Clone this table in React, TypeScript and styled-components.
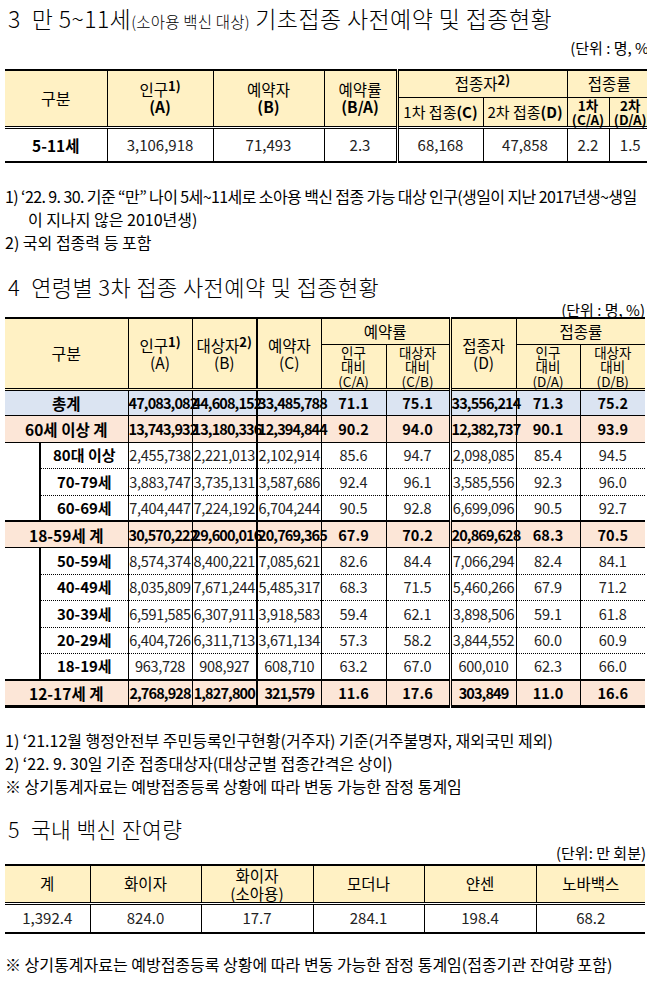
import styled, { createGlobalStyle, css } from 'styled-components';

const GlobalStyle = createGlobalStyle`
  html, body {
    margin: 0;
    padding: 0;
    background: #ffffff;
  }
  body {
    font-family: "Noto Sans CJK KR", "Noto Sans", sans-serif;
    color: #000000;
  }
`;

type Edge = 'none' | 'thin' | 'dot' | 'thick' | 'double' | 'heavy';

const EDGES: Record<Edge, string> = {
  none: 'none',
  thin: '1px solid #000',
  dot: '1px dotted #000',
  thick: '2px solid #000',
  double: '3px double #000',
  heavy: '3px solid #000',
};

interface EdgeProps {
  $top?: Edge;
  $bottom?: Edge;
  $left?: Edge;
  $right?: Edge;
}

const edges = css<EdgeProps>`
  border-top: ${(p) => EDGES[p.$top ?? 'none']};
  border-bottom: ${(p) => EDGES[p.$bottom ?? 'none']};
  border-left: ${(p) => EDGES[p.$left ?? 'thin']};
  border-right: ${(p) => EDGES[p.$right ?? 'thin']};
`;

const YELLOW = '#fff1c4';
const BLUE = '#dbe4f2';
const PEACH = '#fce6d7';

const Page = styled.main`
  box-sizing: border-box;
  width: 647px;
  height: 987px;
  padding-left: 5px;
  overflow: hidden;
`;

const SectionTitle = styled.h2<{ $top: number; $size: number }>`
  margin: ${(p) => p.$top}px 0 0;
  padding-left: 3px;
  font-size: ${(p) => p.$size}px;
  font-weight: 300;
  line-height: 32px;
  letter-spacing: 0.4px;
  white-space: nowrap;
`;

const TitleNo = styled.span`
  margin-right: 11px;
`;

const TitleNote = styled.span`
  font-size: 15.5px;
  letter-spacing: 0.2px;
`;

const Unit = styled.div<{ $top: number; $shift?: number }>`
  margin-top: ${(p) => p.$top}px;
  margin-right: ${(p) => p.$shift ?? 0}px;
  text-align: right;
  font-size: 15px;
  line-height: 15px;
  white-space: nowrap;
`;

const Table = styled.table<{ $width: number; $top: number; $bottom: Edge }>`
  width: ${(p) => p.$width}px;
  margin-top: ${(p) => p.$top}px;
  border-collapse: collapse;
  table-layout: fixed;
  border-top: 2px solid #000;
  border-bottom: ${(p) => EDGES[p.$bottom]};
`;

const Col = styled.col<{ $w: number }>`
  width: ${(p) => p.$w}px;
`;

const Row = styled.tr<{ $h: number }>`
  height: ${(p) => p.$h}px;
`;

const HeadCell = styled.th<EdgeProps & { $size?: number; $lh?: number }>`
  ${edges};
  padding: 0;
  background: ${YELLOW};
  font-size: ${(p) => p.$size ?? 15.5}px;
  font-weight: 400;
  line-height: ${(p) => p.$lh ?? 17}px;
  text-align: center;
  vertical-align: middle;
  white-space: nowrap;
`;

const Paren = styled.span`
  font-weight: 700;
`;

const Sup = styled.sup`
  font-size: 13px;
  font-weight: 700;
  line-height: 0;
  vertical-align: 5px;
`;

const BodyCell = styled.td<
  EdgeProps & { $bg?: string; $bold?: boolean; $size?: number; $tight?: boolean }
>`
  ${edges};
  padding: 0;
  background: ${(p) => p.$bg ?? 'transparent'};
  color: ${(p) => (p.$bold ? '#000' : '#222')};
  font-size: ${(p) => p.$size ?? 14.5}px;
  font-weight: ${(p) => (p.$bold ? 700 : 400)};
  letter-spacing: ${(p) => (p.$tight ? (p.$bold ? -0.9 : -0.3) : 0)}px;
  line-height: 18px;
  text-align: center;
  vertical-align: middle;
  white-space: nowrap;
`;

const Notes = styled.div<{ $top: number }>`
  margin-top: ${(p) => p.$top}px;
  font-size: 16px;
  line-height: 23px;
  white-space: nowrap;
`;

const NoteLine = styled.div<{ $hang?: boolean; $squeeze?: boolean }>`
  padding-left: ${(p) => (p.$hang ? 23 : 0)}px;
  letter-spacing: ${(p) => (p.$squeeze ? -0.6 : 0)}px;
`;

/* ---------- 3. 5~11세 ---------- */

const KIDS_COLS = [102, 106, 111, 73, 86, 84, 42, 42];
const KIDS_VALUES = ['3,106,918', '71,493', '2.3', '68,168', '47,858', '2.2', '1.5'];

function KidsTable() {
  return (
    <Table $width={646} $top={14} $bottom="thick">
      <colgroup>
        {KIDS_COLS.map((w, i) => (
          <Col key={i} $w={w} />
        ))}
      </colgroup>
      <thead>
        <Row $h={27}>
          <HeadCell rowSpan={2} $left="none" $size={16}>
            구분
          </HeadCell>
          <HeadCell rowSpan={2}>
            인구<Sup>1)</Sup>
            <br />
            <Paren>(A)</Paren>
          </HeadCell>
          <HeadCell rowSpan={2}>
            예약자
            <br />
            <Paren>(B)</Paren>
          </HeadCell>
          <HeadCell rowSpan={2}>
            예약률
            <br />
            <Paren>(B/A)</Paren>
          </HeadCell>
          <HeadCell colSpan={2} $left="double" $bottom="thin">
            접종자<Sup>2)</Sup>
          </HeadCell>
          <HeadCell colSpan={2} $bottom="thin" $right="none">
            접종률
          </HeadCell>
        </Row>
        <Row $h={29}>
          <HeadCell $left="double" $size={15}>
            1차 접종<Paren>(C)</Paren>
          </HeadCell>
          <HeadCell $size={15}>
            2차 접종<Paren>(D)</Paren>
          </HeadCell>
          <HeadCell $lh={14} $size={13.5}>
            <Paren>1차</Paren>
            <br />
            <Paren>(C/A)</Paren>
          </HeadCell>
          <HeadCell $lh={14} $size={13.5} $right="none">
            <Paren>2차</Paren>
            <br />
            <Paren>(D/A)</Paren>
          </HeadCell>
        </Row>
      </thead>
      <tbody>
        <Row $h={35}>
          <BodyCell $top="double" $left="none" $bold $size={15.5}>
            5-11세
          </BodyCell>
          {KIDS_VALUES.map((v, i) => (
            <BodyCell
              key={i}
              $top="double"
              $size={15}
              $left={i === 3 ? 'double' : 'thin'}
              $right={i === KIDS_VALUES.length - 1 ? 'none' : 'thin'}
            >
              {v}
            </BodyCell>
          ))}
        </Row>
      </tbody>
    </Table>
  );
}

/* ---------- 4. 연령별 3차 ---------- */

type Kind = 'total' | 'group' | 'sub';

interface AgeRow {
  kind: Kind;
  label: string;
  values: string[];
  top: Edge;
  span?: number;
}

const AGE_COLS = [35, 88, 64, 65, 64, 65, 64, 66, 64, 65];

const AGE_ROWS: AgeRow[] = [
  { kind: 'total', label: '총계', top: 'double', values: ['47,083,082', '44,608,152', '33,485,788', '71.1', '75.1', '33,556,214', '71.3', '75.2'] },
  { kind: 'group', label: '60세 이상 계', top: 'thin', values: ['13,743,932', '13,180,336', '12,394,844', '90.2', '94.0', '12,382,737', '90.1', '93.9'] },
  { kind: 'sub', label: '80대 이상', top: 'thin', span: 3, values: ['2,455,738', '2,221,013', '2,102,914', '85.6', '94.7', '2,098,085', '85.4', '94.5'] },
  { kind: 'sub', label: '70-79세', top: 'dot', values: ['3,883,747', '3,735,131', '3,587,686', '92.4', '96.1', '3,585,556', '92.3', '96.0'] },
  { kind: 'sub', label: '60-69세', top: 'dot', values: ['7,404,447', '7,224,192', '6,704,244', '90.5', '92.8', '6,699,096', '90.5', '92.7'] },
  { kind: 'group', label: '18-59세 계', top: 'thick', values: ['30,570,222', '29,600,016', '20,769,365', '67.9', '70.2', '20,869,628', '68.3', '70.5'] },
  { kind: 'sub', label: '50-59세', top: 'thin', span: 5, values: ['8,574,374', '8,400,221', '7,085,621', '82.6', '84.4', '7,066,294', '82.4', '84.1'] },
  { kind: 'sub', label: '40-49세', top: 'dot', values: ['8,035,809', '7,671,244', '5,485,317', '68.3', '71.5', '5,460,266', '67.9', '71.2'] },
  { kind: 'sub', label: '30-39세', top: 'dot', values: ['6,591,585', '6,307,911', '3,918,583', '59.4', '62.1', '3,898,506', '59.1', '61.8'] },
  { kind: 'sub', label: '20-29세', top: 'dot', values: ['6,404,726', '6,311,713', '3,671,134', '57.3', '58.2', '3,844,552', '60.0', '60.9'] },
  { kind: 'sub', label: '18-19세', top: 'dot', values: ['963,728', '908,927', '608,710', '63.2', '67.0', '600,010', '62.3', '66.0'] },
  { kind: 'group', label: '12-17세 계', top: 'thick', values: ['2,768,928', '1,827,800', '321,579', '11.6', '17.6', '303,849', '11.0', '16.6'] },
];

const TINT: Record<Kind, string | undefined> = {
  total: BLUE,
  group: PEACH,
  sub: undefined,
};

const colLeft = (i: number): Edge => (i === 2 ? 'thick' : i === 5 ? 'double' : 'thin');
const isCount = (i: number) => i < 3 || i === 5;

function AgeTable() {
  return (
    <Table $width={640} $top={0} $bottom="heavy">
      <colgroup>
        {AGE_COLS.map((w, i) => (
          <Col key={i} $w={w} />
        ))}
      </colgroup>
      <thead>
        <Row $h={26}>
          <HeadCell colSpan={2} rowSpan={2} $left="none" $size={16}>
            구분
          </HeadCell>
          <HeadCell rowSpan={2}>
            인구<Sup>1)</Sup>
            <br />
            (A)
          </HeadCell>
          <HeadCell rowSpan={2}>
            대상자<Sup>2)</Sup>
            <br />
            (B)
          </HeadCell>
          <HeadCell rowSpan={2} $left="thick">
            예약자
            <br />
            (C)
          </HeadCell>
          <HeadCell colSpan={2} $bottom="thin">
            예약률
          </HeadCell>
          <HeadCell rowSpan={2} $left="double">
            접종자
            <br />
            (D)
          </HeadCell>
          <HeadCell colSpan={2} $bottom="thin" $right="none">
            접종률
          </HeadCell>
        </Row>
        <Row $h={44}>
          <HeadCell $lh={14.5} $size={13.5}>
            인구
            <br />
            대비
            <br />
            (C/A)
          </HeadCell>
          <HeadCell $lh={14.5} $size={13.5}>
            대상자
            <br />
            대비
            <br />
            (C/B)
          </HeadCell>
          <HeadCell $lh={14.5} $size={13.5}>
            인구
            <br />
            대비
            <br />
            (D/A)
          </HeadCell>
          <HeadCell $lh={14.5} $size={13.5} $right="none">
            대상자
            <br />
            대비
            <br />
            (D/B)
          </HeadCell>
        </Row>
      </thead>
      <tbody>
        {AGE_ROWS.map((row) => {
          const bg = TINT[row.kind];
          const bold = row.kind !== 'sub';
          return (
            <Row key={row.label} $h={26.4}>
              {row.kind === 'sub' ? (
                <>
                  {row.span && (
                    <BodyCell rowSpan={row.span} $top="thin" $left="none" $right="thick" />
                  )}
                  <BodyCell $top={row.top} $left="thick" $bold $size={15}>
                    {row.label}
                  </BodyCell>
                </>
              ) : (
                <BodyCell colSpan={2} $top={row.top} $left="none" $bg={bg} $bold $size={15.5}>
                  {row.label}
                </BodyCell>
              )}
              {row.values.map((v, i) => (
                <BodyCell
                  key={i}
                  $top={row.top}
                  $left={colLeft(i)}
                  $right={i === row.values.length - 1 ? 'none' : 'thin'}
                  $bg={bg}
                  $bold={bold}
                  $tight={isCount(i)}
                >
                  {v}
                </BodyCell>
              ))}
            </Row>
          );
        })}
      </tbody>
    </Table>
  );
}

/* ---------- 5. 백신 잔여량 ---------- */

const STOCK_COLS = [85, 111, 112, 111, 112, 109];
const STOCK_VALUES = ['1,392.4', '824.0', '17.7', '284.1', '198.4', '68.2'];

function StockTable() {
  return (
    <Table $width={640} $top={4} $bottom="thick">
      <colgroup>
        {STOCK_COLS.map((w, i) => (
          <Col key={i} $w={w} />
        ))}
      </colgroup>
      <thead>
        <Row $h={38}>
          <HeadCell $left="none">계</HeadCell>
          <HeadCell>화이자</HeadCell>
          <HeadCell $lh={18}>
            화이자
            <br />
            (소아용)
          </HeadCell>
          <HeadCell>모더나</HeadCell>
          <HeadCell>얀센</HeadCell>
          <HeadCell $right="none">노바백스</HeadCell>
        </Row>
      </thead>
      <tbody>
        <Row $h={30}>
          {STOCK_VALUES.map((v, i) => (
            <BodyCell
              key={i}
              $top="double"
              $size={15}
              $left={i === 0 ? 'none' : 'thin'}
              $right={i === STOCK_VALUES.length - 1 ? 'none' : 'thin'}
            >
              {v}
            </BodyCell>
          ))}
        </Row>
      </tbody>
    </Table>
  );
}

export default function App() {
  return (
    <>
      <GlobalStyle />
      <Page>
        <SectionTitle $top={2} $size={23}>
          <TitleNo>3</TitleNo>만 5~11세<TitleNote>(소아용 백신 대상)</TitleNote> 기초접종 사전예약 및
          접종현황
        </SectionTitle>
        <Unit $top={3} $shift={-7}>
          (단위 : 명, %)
        </Unit>
        <KidsTable />
        <Notes $top={22}>
          <NoteLine $squeeze>
            1) ‘22. 9. 30. 기준 “만” 나이 5세~11세로 소아용 백신 접종 가능 대상 인구(생일이 지난
            2017년생~생일
          </NoteLine>
          <NoteLine $hang>이 지나지 않은 2010년생)</NoteLine>
          <NoteLine>2) 국외 접종력 등 포함</NoteLine>
        </Notes>

        <SectionTitle $top={16} $size={22}>
          <TitleNo>4</TitleNo>연령별 3차 접종 사전예약 및 접종현황
        </SectionTitle>
        <Unit $top={0} $shift={2}>
          (단위 : 명, %)
        </Unit>
        <AgeTable />
        <Notes $top={21}>
          <NoteLine>1) ‘21.12월 행정안전부 주민등록인구현황(거주자) 기준(거주불명자, 재외국민 제외)</NoteLine>
          <NoteLine>2) ‘22. 9. 30일 기준 접종대상자(대상군별 접종간격은 상이)</NoteLine>
          <NoteLine>※ 상기통계자료는 예방접종등록 상황에 따라 변동 가능한 잠정 통계임</NoteLine>
        </Notes>

        <SectionTitle $top={15} $size={21.5}>
          <TitleNo>5</TitleNo>국내 백신 잔여량
        </SectionTitle>
        <Unit $top={0} $shift={1}>
          (단위: 만 회분)
        </Unit>
        <StockTable />
        <Notes $top={19}>
          <NoteLine>
            ※ 상기통계자료는 예방접종등록 상황에 따라 변동 가능한 잠정 통계임(접종기관 잔여량 포함)
          </NoteLine>
        </Notes>
      </Page>
    </>
  );
}
